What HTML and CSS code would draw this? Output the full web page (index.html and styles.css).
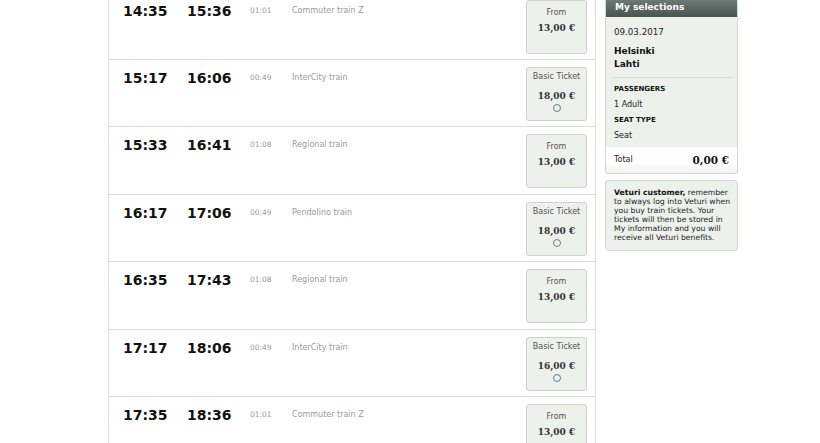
FILE: index.html
```html
<!DOCTYPE html>
<html>
<head>
<meta charset="utf-8">
<link rel="stylesheet" href="styles.css">
</head>
<body>
<div class="page">
  <div class="results">
    <div class="row">
      <div class="time">14:35</div>
      <div class="time t2">15:36</div>
      <div class="dur">01:01</div>
      <div class="type">Commuter train Z</div>
      <div class="price from"><div class="label">From</div><div class="amount">13,00 €</div></div>
    </div>
    <div class="row">
      <div class="time">15:17</div>
      <div class="time t2">16:06</div>
      <div class="dur">00:49</div>
      <div class="type">InterCity train</div>
      <div class="price"><div class="label">Basic Ticket</div><div class="amount">18,00 €</div><span class="radio"></span></div>
    </div>
    <div class="row">
      <div class="time">15:33</div>
      <div class="time t2">16:41</div>
      <div class="dur">01:08</div>
      <div class="type">Regional train</div>
      <div class="price from"><div class="label">From</div><div class="amount">13,00 €</div></div>
    </div>
    <div class="row">
      <div class="time">16:17</div>
      <div class="time t2">17:06</div>
      <div class="dur">00:49</div>
      <div class="type">Pendolino train</div>
      <div class="price"><div class="label">Basic Ticket</div><div class="amount">18,00 €</div><span class="radio"></span></div>
    </div>
    <div class="row">
      <div class="time">16:35</div>
      <div class="time t2">17:43</div>
      <div class="dur">01:08</div>
      <div class="type">Regional train</div>
      <div class="price from"><div class="label">From</div><div class="amount">13,00 €</div></div>
    </div>
    <div class="row">
      <div class="time">17:17</div>
      <div class="time t2">18:06</div>
      <div class="dur">00:49</div>
      <div class="type">InterCity train</div>
      <div class="price"><div class="label">Basic Ticket</div><div class="amount">16,00 €</div><span class="radio"></span></div>
    </div>
    <div class="row">
      <div class="time">17:35</div>
      <div class="time t2">18:36</div>
      <div class="dur">01:01</div>
      <div class="type">Commuter train Z</div>
      <div class="price from"><div class="label">From</div><div class="amount">13,00 €</div></div>
    </div>
  </div>
  <aside class="sidebar">
    <div class="sel">
      <div class="sel-head">My selections</div>
      <div class="sel-body">
        <div class="date">09.03.2017</div>
        <div class="city first">Helsinki</div>
        <div class="city">Lahti</div>
        <div class="sep"></div>
        <div class="cap">PASSENGERS</div>
        <div class="val">1 Adult</div>
        <div class="cap second">SEAT TYPE</div>
        <div class="val">Seat</div>
      </div>
      <div class="total"><span class="total-label">Total</span><span class="total-amount">0,00 €</span></div>
    </div>
    <div class="info"><b>Veturi customer,</b> remember<br>to always log into Veturi when<br>you buy train tickets. Your<br>tickets will then be stored in<br>My information and you will<br>receive all Veturi benefits.</div>
  </aside>
</div>
</body>
</html>
```
FILE: styles.css
```css
html, body {
  margin: 0;
  padding: 0;
  background: #fff;
}
body {
  font-family: "DejaVu Sans", Verdana, sans-serif;
  color: #222;
  overflow: hidden;
}
.page {
  display: flex;
  align-items: flex-start;
  padding-left: 108px;
}
.results {
  width: 488px;
  box-sizing: border-box;
  border-left: 1px solid #dcdcdc;
  border-right: 1px solid #dcdcdc;
  margin-top: -7.4px;
}
.row {
  display: flex;
  align-items: flex-start;
  height: 67.4px;
  box-sizing: border-box;
  border-bottom: 1px solid #dcdcdc;
  padding: 10px 8px 0 14px;
}
.time {
  width: 64px;
  font-size: 14px;
  line-height: 17px;
  font-weight: bold;
  color: #111;
}
.t2 { width: 63px; }
.dur {
  width: 42px;
  font-size: 7.5px;
  line-height: 10px;
  color: #9a9a9a;
  padding-top: 3px;
}
.type {
  flex: 1;
  font-size: 8px;
  line-height: 10px;
  color: #9a9a9a;
  padding-top: 3px;
}
.price {
  width: 61px;
  height: 54px;
  box-sizing: border-box;
  margin-top: -3px;
  border: 1px solid #cdd2cb;
  border-radius: 3px;
  background: #edf1eb;
  text-align: center;
  padding-top: 3px;
}
.price.from { padding-top: 6px; }
.label {
  font-size: 8px;
  line-height: 12px;
  color: #555;
}
.amount {
  margin-top: 6px;
  font-family: "DejaVu Serif", Georgia, serif;
  font-weight: bold;
  font-size: 9px;
  line-height: 14px;
  color: #333;
}
.price.from .amount { margin-top: 2px; }
.radio {
  display: inline-block;
  width: 8px;
  height: 8px;
  box-sizing: border-box;
  margin-top: 1px;
  border: 1px solid #5f7b97;
  border-radius: 50%;
  vertical-align: top;
}
.sidebar {
  width: 133px;
  margin-left: 9px;
  display: flex;
  flex-direction: column;
  gap: 6px;
}
.sel {
  border-radius: 0 0 3px 3px;
  overflow: hidden;
  border: 1px solid #d3d8d1;
  border-top: none;
  background: #edf1eb;
}
.sel-head {
  height: 17px;
  box-sizing: border-box;
  padding: 0 0 2px 9px;
  line-height: 15px;
  font-size: 9px;
  font-weight: bold;
  color: #fff;
  background: linear-gradient(#6c7975, #48544f);
}
.sel-body {
  padding: 9px 6px 6px 8px;
}
.date {
  font-size: 8.7px;
  line-height: 12px;
}
.city {
  font-size: 9px;
  line-height: 13px;
  font-weight: bold;
  color: #111;
}
.city.first { margin-top: 7px; }
.sep {
  height: 1px;
  background: #d6dbd4;
  margin: 6px -2px 6px -2px;
}
.cap {
  font-size: 7px;
  line-height: 10px;
  font-weight: bold;
  color: #111;
}
.cap.second { margin-top: 5.5px; }
.val {
  font-size: 8px;
  line-height: 11px;
  margin-top: 4.5px;
}
.total {
  display: flex;
  justify-content: space-between;
  align-items: center;
  height: 26px;
  padding: 0 8px;
  background: linear-gradient(#ffffff 60%, #f1f1f1);
}
.total-label {
  font-size: 8px;
}
.total-amount {
  font-family: "DejaVu Serif", Georgia, serif;
  font-weight: bold;
  font-size: 10.5px;
  color: #111;
}
.info {
  border: 1px solid #d3d8d1;
  border-radius: 3px;
  background: #edf1eb;
  padding: 7.5px 4px 7.5px 8px;
  font-size: 7.7px;
  line-height: 9px;
  color: #222;
  white-space: nowrap;
}
.info b { color: #111; }
```
